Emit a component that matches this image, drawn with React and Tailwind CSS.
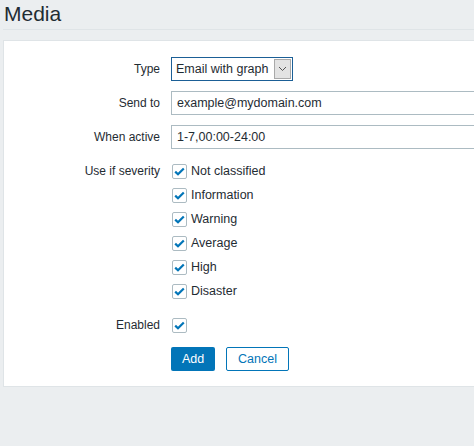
import { useState } from 'react';

const severities = ['Not classified', 'Information', 'Warning', 'Average', 'High', 'Disaster'];

const Check = ({ label }) => (
  <div className="flex items-center h-6 gap-[4px]">
    <span className="w-[15px] h-[15px] ml-[1px] border border-[#acbbc2] rounded-[2px] bg-white flex items-center justify-center">
      <svg width="11" height="9" viewBox="0 0 11 9">
        <path d="M1.2 4.6 L4 7.3 L9.8 1.5" fill="none" stroke="#0275b8" strokeWidth="2.2" />
      </svg>
    </span>
    {label && <span>{label}</span>}
  </div>
);

const Row = ({ label, children, className = '' }) => (
  <div className={`flex ${className}`}>
    <div className="w-[156px] shrink-0 text-right leading-6 text-[12px]">{label}</div>
    <div className="ml-[11px]">{children}</div>
  </div>
);

export default function App() {
  const [sendTo] = useState('example@mydomain.com');

  return (
    <div
      className="w-[474px] h-[446px] overflow-hidden bg-[#ebeef0] text-[12.5px] text-[#1f2c33]"
      style={{ fontFamily: '"Liberation Sans", Arial, sans-serif' }}
    >
      <div className="w-[700px] pl-[3px]">
        {/* Header */}
        <div className="h-[30px] border-b border-[#dfe4e7]">
          <h1 className="text-[21px] leading-[25px] pl-[1px] pt-[1px] text-[#1f2c33]">Media</h1>
        </div>

        {/* Form panel */}
        <div className="mt-[10px] bg-white border border-[#dfe4e7] pt-[16px] pb-[15px]">
          <Row label="Type">
            <div className="w-[122px] h-6 border border-[#1b5f96] flex items-center justify-between pl-[4px] pr-[1px]">
              <span>Email with graph</span>
              <span className="w-[17px] h-[20px] bg-[#e3e3e3] border border-[#a9a9a9] flex items-center justify-center">
                <svg width="9" height="6" viewBox="0 0 9 6">
                  <path d="M1 1 L4.5 4.5 L8 1" fill="none" stroke="#555" strokeWidth="1" />
                </svg>
              </span>
            </div>
          </Row>

          <Row label="Send to" className="mt-[10px]">
            <div className="w-[330px] h-6 border border-[#acbbc2] px-[5px] flex items-center">{sendTo}</div>
          </Row>

          <Row label="When active" className="mt-[10px]">
            <div className="w-[330px] h-6 border border-[#acbbc2] px-[5px] flex items-center">1-7,00:00-24:00</div>
          </Row>

          <Row label="Use if severity" className="mt-[10px]">
            <div className="flex flex-col">
              {severities.map((s) => (
                <Check key={s} label={s} />
              ))}
            </div>
          </Row>

          <Row label="Enabled" className="mt-[10px]">
            <Check />
          </Row>

          <Row label="" className="mt-[10px]">
            <div className="flex gap-[11px]">
              <button className="w-[44px] h-6 bg-[#0275b8] text-white rounded-[2px]">Add</button>
              <button className="w-[63px] h-6 bg-white border border-[#0275b8] text-[#0275b8] rounded-[2px]">Cancel</button>
            </div>
          </Row>
        </div>
      </div>
    </div>
  );
}
